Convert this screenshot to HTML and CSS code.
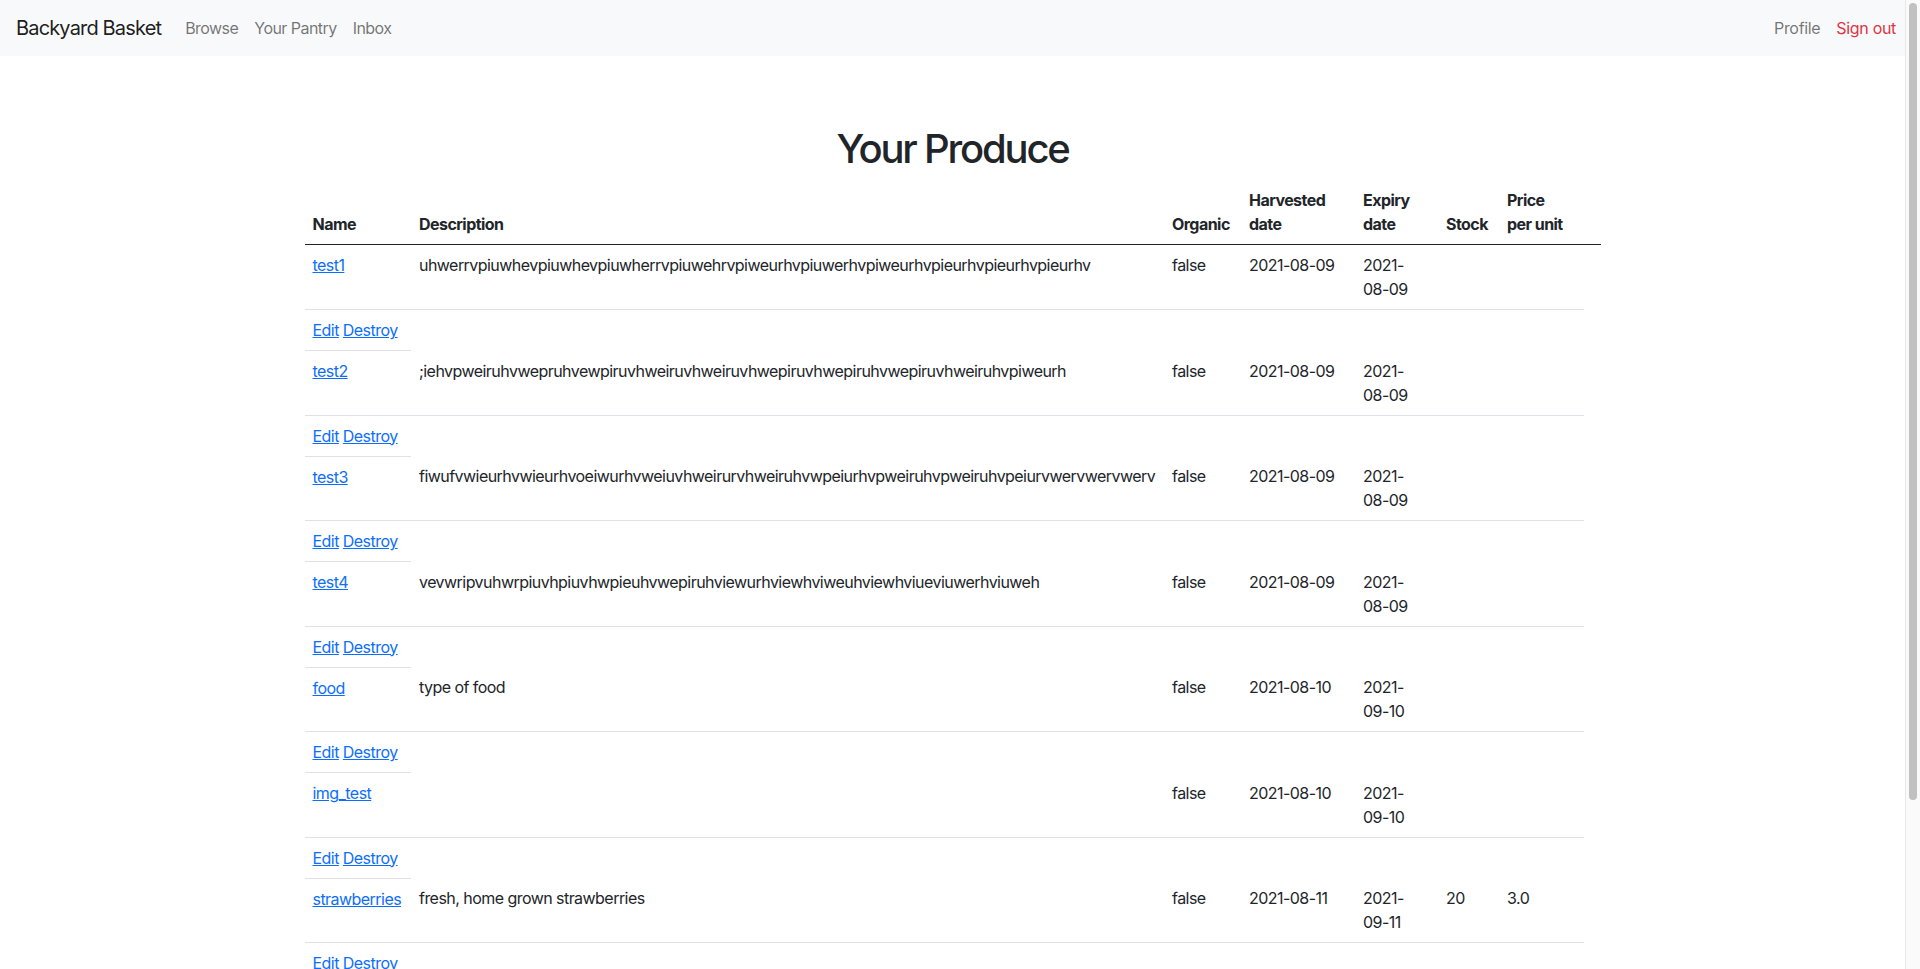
FILE: index.html
```html
<!DOCTYPE html>
<html lang="en">
<head>
<meta charset="utf-8">
<title>Backyard Basket</title>
<link rel="stylesheet" href="styles.css">
</head>
<body>
<div class="page">
<nav class="navbar">
  <div class="nav-left">
    <a class="brand" href="#">Backyard Basket</a>
    <a class="nav-link" href="#">Browse</a>
    <a class="nav-link" href="#">Your Pantry</a>
    <a class="nav-link" href="#">Inbox</a>
  </div>
  <div class="nav-right">
    <a class="nav-link" href="#">Profile</a>
    <a class="nav-link danger" href="#">Sign out</a>
  </div>
</nav>

<main class="container">
  <h1 class="title">Your Produce</h1>
  <table class="produce-table">
    <colgroup>
      <col class="c-name">
      <col class="c-desc">
      <col class="c-org">
      <col class="c-harv">
      <col class="c-exp">
      <col class="c-stock">
      <col class="c-price">
      <col class="c-act">
    </colgroup>
    <thead>
      <tr>
        <th>Name</th>
        <th>Description</th>
        <th>Organic</th>
        <th>Harvested date</th>
        <th class="exp">Expiry date</th>
        <th>Stock</th>
        <th class="price">Price per unit</th>
        <th></th>
      </tr>
    </thead>
    <tbody>
      <tr>
        <td><a href="#">test1</a></td>
        <td>uhwerrvpiuwhevpiuwhevpiuwherrvpiuwehrvpiweurhvpiuwerhvpiweurhvpieurhvpieurhvpieurhv</td>
        <td>false</td>
        <td>2021-08-09</td>
        <td class="exp">2021-08-09</td>
        <td></td>
        <td></td>
      </tr>
      <tr class="actions"><td><a href="#">Edit</a> <a href="#">Destroy</a></td></tr>
      <tr>
        <td><a href="#">test2</a></td>
        <td>;iehvpweiruhvwepruhvewpiruvhweiruvhweiruvhwepiruvhwepiruhvwepiruvhweiruhvpiweurh</td>
        <td>false</td>
        <td>2021-08-09</td>
        <td class="exp">2021-08-09</td>
        <td></td>
        <td></td>
      </tr>
      <tr class="actions"><td><a href="#">Edit</a> <a href="#">Destroy</a></td></tr>
      <tr>
        <td><a href="#">test3</a></td>
        <td>fiwufvwieurhvwieurhvoeiwurhvweiuvhweirurvhweiruhvwpeiurhvpweiruhvpweiruhvpeiurvwervwervwerv</td>
        <td>false</td>
        <td>2021-08-09</td>
        <td class="exp">2021-08-09</td>
        <td></td>
        <td></td>
      </tr>
      <tr class="actions"><td><a href="#">Edit</a> <a href="#">Destroy</a></td></tr>
      <tr>
        <td><a href="#">test4</a></td>
        <td>vevwripvuhwrpiuvhpiuvhwpieuhvwepiruhviewurhviewhviweuhviewhviueviuwerhviuweh</td>
        <td>false</td>
        <td>2021-08-09</td>
        <td class="exp">2021-08-09</td>
        <td></td>
        <td></td>
      </tr>
      <tr class="actions"><td><a href="#">Edit</a> <a href="#">Destroy</a></td></tr>
      <tr>
        <td><a href="#">food</a></td>
        <td>type of food</td>
        <td>false</td>
        <td>2021-08-10</td>
        <td class="exp">2021-09-10</td>
        <td></td>
        <td></td>
      </tr>
      <tr class="actions"><td><a href="#">Edit</a> <a href="#">Destroy</a></td></tr>
      <tr>
        <td><a href="#">img_test</a></td>
        <td></td>
        <td>false</td>
        <td>2021-08-10</td>
        <td class="exp">2021-09-10</td>
        <td></td>
        <td></td>
      </tr>
      <tr class="actions"><td><a href="#">Edit</a> <a href="#">Destroy</a></td></tr>
      <tr>
        <td><a href="#">strawberries</a></td>
        <td>fresh, home grown strawberries</td>
        <td>false</td>
        <td>2021-08-11</td>
        <td class="exp">2021-09-11</td>
        <td>20</td>
        <td>3.0</td>
      </tr>
      <tr class="actions"><td><a href="#">Edit</a> <a href="#">Destroy</a></td></tr>
    </tbody>
  </table>
  <p class="new-link"><a href="#">New Produce</a></p>
</main>
</div>
<div class="scrollbar"><div class="scroll-thumb"></div></div>
</body>
</html>
```

FILE: styles.css
```css
body {
  margin: 0;
  font-family: Inter, "Liberation Sans", Arial, sans-serif;
  font-size: 16px;
  line-height: 1.5;
  letter-spacing: -0.034em;
  color: #212529;
  background: #fff;
}
.page {
  margin-right: 15px;
}
a {
  color: #0d6efd;
  text-decoration: underline;
}
.navbar {
  display: flex;
  align-items: center;
  justify-content: space-between;
  height: 56px;
  padding: 0 1px 0 16px;
  background: #f8f9fa;
}
.nav-left,
.nav-right {
  display: flex;
  align-items: center;
}
.brand {
  font-size: 20px;
  line-height: 30px;
  letter-spacing: -0.042em;
  color: rgba(0, 0, 0, 0.9);
  text-decoration: none;
  margin-right: 16px;
}
.nav-link {
  padding: 8px;
  line-height: 24px;
  color: rgba(0, 0, 0, 0.55);
  text-decoration: none;
}
.nav-right .nav-link {
  letter-spacing: -0.02em;
}
.nav-link.danger {
  color: #dc3545;
}
.container {
  max-width: 1296px;
  margin: 0 auto;
  padding: 0 12px 124px;
}
.title {
  margin: 69px 0 7px;
  text-align: center;
  font-size: 40px;
  font-weight: 500;
  line-height: 1.2;
  letter-spacing: -0.055em;
}
.produce-table {
  width: 100%;
  table-layout: fixed;
  border-collapse: collapse;
  margin-bottom: 16px;
}
.c-name { width: 106.5px; }
.c-desc { width: 753px; }
.c-org { width: 77px; }
.c-harv { width: 114px; }
.c-exp { width: 83px; }
.c-stock { width: 61px; }
.c-price { width: 85px; }
.c-act { width: 16.5px; }
.produce-table th,
.produce-table td {
  padding: 8px;
  text-align: left;
  vertical-align: top;
}
.produce-table th {
  font-weight: 700;
  vertical-align: bottom;
  border-bottom: 1px solid #212529;
}
.produce-table td {
  border-bottom: 1px solid #dee2e6;
}
.produce-table .exp {
  padding-right: 16px;
}
.produce-table .price {
  padding-right: 15px;
}
.new-link {
  margin: 40px 0 0;
}
.scrollbar {
  position: fixed;
  top: 0;
  right: 0;
  bottom: 0;
  width: 14px;
  background: #fafafa;
  border-left: 1px solid #e8e8e8;
}
.scroll-thumb {
  margin: 3px 3px 0 3px;
  height: 797px;
  border-radius: 4px;
  background: #c1c1c1;
}
```
